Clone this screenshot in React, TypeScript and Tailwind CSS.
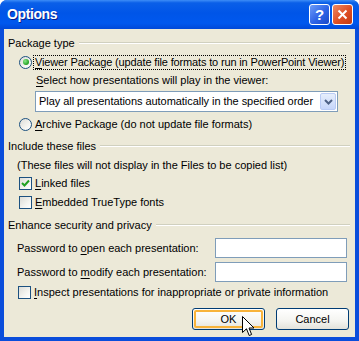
import React from 'react';

const font = "font-['Liberation_Sans',Arial,sans-serif]";

function Radio({ checked }: { checked?: boolean }) {
  return (
    <span className="relative flex h-[13px] w-[13px] shrink-0 items-center justify-center rounded-full border border-[#1C5180] bg-[linear-gradient(135deg,#DCDCD7_0%,#F4F4F0_60%,#FFFFFF_100%)]">
      {checked && (
        <span className="h-[6px] w-[6px] rounded-full bg-[radial-gradient(circle_at_35%_35%,#8AE887_0%,#21A121_70%,#1A8A1A_100%)]" />
      )}
    </span>
  );
}

function Check({ checked }: { checked?: boolean }) {
  return (
    <span className="flex h-[13px] w-[13px] shrink-0 items-center justify-center border border-[#1C5180] bg-[linear-gradient(135deg,#DCDCD7_0%,#F4F4F0_60%,#FFFFFF_100%)]">
      {checked && (
        <svg width="9" height="9" viewBox="0 0 9 9">
          <path d="M1 4 L3.5 6.5 L8 1.5" stroke="#21A121" strokeWidth="2" fill="none" />
        </svg>
      )}
    </span>
  );
}

function Header({ text, className }: { text: string; className?: string }) {
  return (
    <div className={`flex h-[14px] items-center pl-[4px] pr-[5px] ${className ?? ''}`}>
      <span className="whitespace-nowrap">{text}</span>
      <span className="ml-[4px] h-[2px] flex-1 border-t border-b border-t-[#D0D0BF] border-b-white" />
    </div>
  );
}

function U({ children }: { children: React.ReactNode }) {
  return <span className="underline underline-offset-[2px]">{children}</span>;
}

function Button({ label, hot }: { label: string; hot?: boolean }) {
  return (
    <div className="h-[22px] w-[73px] rounded-[3px] border border-[#003C74] bg-[linear-gradient(to_bottom,#FFFFFF_0%,#F4F4F0_60%,#E3E2DA_100%)] p-[1px]">
      <div
        className={`flex h-full w-full items-center justify-center rounded-[2px] ${
          hot ? 'border-2 border-[#F8B33A]' : ''
        }`}
      >
        {label}
      </div>
    </div>
  );
}

export default function App() {
  return (
    <div className={`relative flex h-[341px] w-[359px] flex-col overflow-hidden rounded-t-[7px] bg-[#0A4DDB] text-[11px] leading-[13px] text-black ${font}`}>
      {/* caption */}
      <div className="flex h-[29px] shrink-0 items-center bg-[linear-gradient(to_bottom,#3D8DF7_0%,#0A5FE8_10%,#0055E8_45%,#0058EE_80%,#0048D8_100%)] pl-[7px] pr-[6px]">
        <span className="font-['Liberation_Sans',Arial,sans-serif] text-[14px] font-bold tracking-[-0.4px] text-white [text-shadow:1px_1px_0_#0A1E8A]">
          Options
        </span>
        <div className="ml-auto flex gap-[2px]">
          <div className="flex h-[21px] w-[21px] items-center justify-center rounded-[3px] border border-white bg-[linear-gradient(135deg,#6D9CF8_0%,#2D63E6_55%,#1A48C8_100%)] text-[15px] font-bold leading-none text-white">
            ?
          </div>
          <div className="flex h-[21px] w-[21px] items-center justify-center rounded-[3px] border border-white bg-[linear-gradient(135deg,#EE8A64_0%,#DE4E24_55%,#C33A12_100%)]">
            <svg width="11" height="11" viewBox="0 0 11 11">
              <path d="M1.5 1.5 L9.5 9.5 M9.5 1.5 L1.5 9.5" stroke="white" strokeWidth="2" />
            </svg>
          </div>
        </div>
      </div>

      {/* body */}
      <div className="mx-[4px] mb-[4px] flex flex-1 flex-col whitespace-nowrap bg-[#ECE9D8]">
        <Header text="Package type" className="mt-[7px]" />

        <div className="mt-[5px] flex h-[14px] items-center pl-[15px]">
          <Radio checked />
          <span className="ml-[1px] shrink-0 border border-dotted border-black px-[1px] tracking-[-0.15px]">
            <U>V</U>iewer Package (update file formats to run in PowerPoint Viewer)
          </span>
        </div>

        <div className="mt-[4px] flex h-[14px] items-center pl-[32px]">
          <span>
            <U>S</U>elect how presentations will play in the viewer:
          </span>
        </div>

        <div className="ml-[31px] mt-[4px] flex h-[21px] w-[303px] items-center border border-[#7F9DB9] bg-white pl-[3px] pr-[1px]">
          <span className="flex-1 tracking-[-0.05px]">Play all presentations automatically in the specified order</span>
          <span className="flex h-[17px] w-[16px] items-center justify-center rounded-[2px] border border-[#B9CBF5] bg-[linear-gradient(to_bottom,#E6EEFC_0%,#C6D6FA_100%)]">
            <svg width="9" height="6" viewBox="0 0 9 6">
              <path d="M1 1 L4.5 4.5 L8 1" stroke="#4D6185" strokeWidth="2" fill="none" />
            </svg>
          </span>
        </div>

        <div className="mt-[5px] flex h-[14px] items-center pl-[15px]">
          <Radio />
          <span className="ml-[2px] px-[1px]">
            <U>A</U>rchive Package (do not update file formats)
          </span>
        </div>

        <Header text="Include these files" className="mt-[8px]" />

        <div className="mt-[5px] flex h-[14px] items-center pl-[13px]">
          (These files will not display in the Files to be copied list)
        </div>

        <div className="mt-[4px] flex h-[14px] items-center pl-[15px]">
          <Check checked />
          <span className="ml-[3px]">
            <U>L</U>inked files
          </span>
        </div>

        <div className="mt-[5px] flex h-[14px] items-center pl-[15px]">
          <Check />
          <span className="ml-[3px]">
            <U>E</U>mbedded TrueType fonts
          </span>
        </div>

        <Header text="Enhance security and privacy" className="mt-[9px]" />

        <div className="mt-[6px] flex h-[20px] items-center pl-[13px]">
          <span className="flex-1">
            Password to <U>o</U>pen each presentation:
          </span>
          <span className="mr-[8px] h-[20px] w-[132px] border border-[#7F9DB9] bg-white" />
        </div>

        <div className="mt-[4px] flex h-[20px] items-center pl-[13px]">
          <span className="flex-1">
            Password to <U>m</U>odify each presentation:
          </span>
          <span className="mr-[8px] h-[20px] w-[132px] border border-[#7F9DB9] bg-white" />
        </div>

        <div className="mt-[3px] flex h-[14px] items-center pl-[14px]">
          <Check />
          <span className="ml-[3px]">
            <U>I</U>nspect presentations for inappropriate or private information
          </span>
        </div>

        <div className="mt-[9px] flex justify-end gap-[11px] pr-[6px]">
          <Button label="OK" hot />
          <Button label="Cancel" />
        </div>
      </div>

      {/* mouse pointer */}
      <svg className="absolute left-[242px] top-[316px]" width="13" height="21" viewBox="0 0 13 21">
        <path
          d="M0.5 0.5 V16.5 L4.5 12.8 L7.2 19.5 L9.6 18.5 L7 12 H12 Z"
          fill="white"
          stroke="black"
          strokeWidth="1"
          strokeLinejoin="miter"
        />
      </svg>
    </div>
  );
}
